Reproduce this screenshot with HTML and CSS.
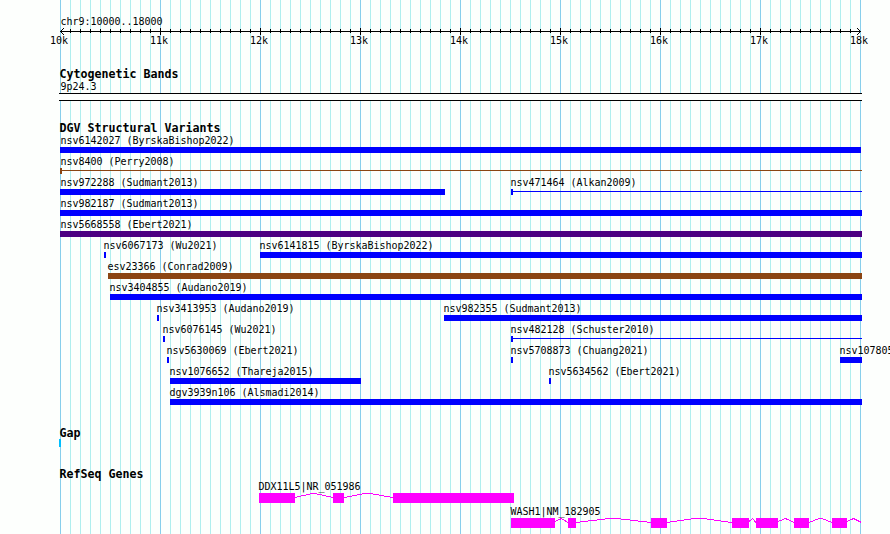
FILE: index.html
```html
<!DOCTYPE html>
<html lang="en">
<head>
  <meta charset="UTF-8">
  <title>chr9:10000..18000</title>
  <link rel="stylesheet" href="styles.css">
</head>
<body>
  <div class="panel">
    <div class="ruler">
      <div class="label">chr9:10000..18000</div>
      <svg class="scale" width="890" height="7" shape-rendering="crispEdges">
        <defs>
          <pattern id="minor" x="60" width="10" height="7" patternUnits="userSpaceOnUse">
            <rect y="1" width="1" height="4"/>
          </pattern>
          <pattern id="major" x="60" width="100" height="7" patternUnits="userSpaceOnUse">
            <rect width="1" height="7"/>
          </pattern>
        </defs>
        <rect x="60" y="3" width="801" height="1"/>
        <rect x="65" width="790" height="7" fill="url(#minor)"/>
        <rect x="65" width="790" height="7" fill="url(#major)"/>
        <path d="M61 2h1v1h-1zM62 1h1v1h-1zM63 0h1v1h-1zM61 4h1v1h-1zM62 5h1v1h-1zM63 6h1v1h-1z"/>
        <path d="M859 2h1v1h-1zM858 1h1v1h-1zM857 0h1v1h-1zM859 4h1v1h-1zM858 5h1v1h-1zM857 6h1v1h-1z"/>
      </svg>
      <div class="numbers">
        <span>10k</span><span>11k</span><span>12k</span><span>13k</span><span>14k</span><span>15k</span><span>16k</span><span>17k</span><span>18k</span>
      </div>
    </div>

    <div class="track">
      <h2>Cytogenetic Bands</h2>
      <div class="label">9p24.3</div>
      <div class="band"></div>
    </div>

    <div class="track variants">
      <h2>DGV Structural Variants</h2>
      <div class="row">
        <div class="feature edge" style="--x:60;--w:801"><span>nsv6142027 (ByrskaBishop2022)</span><i></i></div>
      </div>
      <div class="row">
        <div class="feature edge thin brown" style="--x:60;--w:802"><span>nsv8400 (Perry2008)</span><i></i></div>
      </div>
      <div class="row">
        <div class="feature edge" style="--x:60;--w:385"><span>nsv972288 (Sudmant2013)</span><i></i></div>
        <div class="feature thin" style="--x:511;--w:351"><span>nsv471464 (Alkan2009)</span><i></i></div>
      </div>
      <div class="row">
        <div class="feature edge" style="--x:60;--w:802"><span>nsv982187 (Sudmant2013)</span><i></i></div>
      </div>
      <div class="row">
        <div class="feature edge purple" style="--x:60;--w:802"><span>nsv5668558 (Ebert2021)</span><i></i></div>
      </div>
      <div class="row">
        <div class="feature" style="--x:104;--w:2"><span>nsv6067173 (Wu2021)</span><i></i></div>
        <div class="feature" style="--x:260;--w:602"><span>nsv6141815 (ByrskaBishop2022)</span><i></i></div>
      </div>
      <div class="row">
        <div class="feature brown" style="--x:108;--w:754"><span>esv23366 (Conrad2009)</span><i></i></div>
      </div>
      <div class="row">
        <div class="feature" style="--x:110;--w:752"><span>nsv3404855 (Audano2019)</span><i></i></div>
      </div>
      <div class="row">
        <div class="feature" style="--x:157;--w:2"><span>nsv3413953 (Audano2019)</span><i></i></div>
        <div class="feature" style="--x:444;--w:418"><span>nsv982355 (Sudmant2013)</span><i></i></div>
      </div>
      <div class="row">
        <div class="feature" style="--x:163;--w:2"><span>nsv6076145 (Wu2021)</span><i></i></div>
        <div class="feature thin" style="--x:511;--w:351"><span>nsv482128 (Schuster2010)</span><i></i></div>
      </div>
      <div class="row">
        <div class="feature" style="--x:167;--w:2"><span>nsv5630069 (Ebert2021)</span><i></i></div>
        <div class="feature" style="--x:511;--w:2"><span>nsv5708873 (Chuang2021)</span><i></i></div>
        <div class="feature" style="--x:840;--w:22"><span>nsv107805</span><i></i></div>
      </div>
      <div class="row">
        <div class="feature" style="--x:170;--w:191"><span>nsv1076652 (Thareja2015)</span><i></i></div>
        <div class="feature" style="--x:549;--w:2"><span>nsv5634562 (Ebert2021)</span><i></i></div>
      </div>
      <div class="row">
        <div class="feature" style="--x:170;--w:692"><span>dgv3939n106 (Alsmadi2014)</span><i></i></div>
      </div>
    </div>

    <div class="track">
      <h2>Gap</h2>
      <div class="gap"></div>
    </div>

    <div class="track">
      <h2>RefSeq Genes</h2>
      <div class="gene" style="--x:259">
        <span>DDX11L5|NR_051986</span>
        <svg width="255" height="10" shape-rendering="crispEdges">
          <path class="exon" d="M0 0h36v10h-36zM74 0h11v10h-11zM134 0h121v10h-121z"/>
          <path class="intron" d="M36 4.5L53 .5H56L74 4.5M85 4.5L106 .5H111L134 4.5"/>
        </svg>
      </div>
      <div class="gene" style="--x:511">
        <span>WASH1|NM_182905</span>
        <svg width="351" height="10" shape-rendering="crispEdges">
          <path class="exon" d="M0 0h44v10h-44zM57 0h8v10h-8zM140 0h16v10h-16zM221 0h17v10h-17zM245 0h22v10h-22zM283 0h15v10h-15zM321 0h15v10h-15z"/>
          <path class="intron" d="M44 3.5L50.5 .5L57 4.5M65 4.5L98 .5H106L140 4.5M156 4.5L184 .5H192L221 4.5M238 3.5L241.5 .5L245 4.5M267 3.5L274.5 .5L283 4.5M298 4.5L308 .5H311L321 4.5M336 3.5L342.5 .5L350.5 4.5"/>
        </svg>
      </div>
    </div>
  </div>
</body>
</html>
```
FILE: styles.css
```css
body {
  margin: 0;
  overflow: hidden;
  background: #fdfffd;
  color: #000;
  font: 10px/13px "DejaVu Sans Mono", "Liberation Mono", monospace;
  letter-spacing: -0.02px;
}
.panel {
  width: 890px;
  height: 534px;
  overflow: hidden;
  box-sizing: border-box;
  padding-top: 15px;
  /* major lines every 1k, minor lines every 100bp */
  background:
    repeating-linear-gradient(to right, #87ceeb 0 1px, transparent 1px 100px) 60px 0 / 801px 100% no-repeat,
    repeating-linear-gradient(to right, #afeeee 0 1px, transparent 1px 10px) 60px 0 / 801px 100% no-repeat;
}
svg {
  display: block;
}
.label {
  height: 13px;
  padding-left: 60.5px;
}
.numbers {
  display: flex;
  height: 13px;
  margin-top: -1px;
  padding-left: 50px;
}
.numbers span {
  flex: none;
  width: 100px;
}
.track {
  margin-top: 21px;
}
.track h2 {
  height: 12px;
  margin: 0;
  padding-left: 59.5px;
  font-size: 11.63px;
  line-height: 13px;
  letter-spacing: 0;
}
.band {
  width: 803px;
  height: 6px;
  margin-left: 59px;
  border: solid #000;
  border-width: 1px 0;
  background: #fdfffd;
}
.variants {
  margin-bottom: -1px;
}
.row {
  display: grid;
  height: 21px;
}
/* all features of a row share one cell, --x is the start */
.feature {
  grid-area: 1 / 1;
  margin-left: calc(var(--x) * 1px);
  color: #00f;
}
.feature span, .gene span {
  display: block;
  width: 0;
  height: 13px;
  margin-left: -0.5px;
  white-space: nowrap;
  color: #000;
}
.feature.edge span {
  margin-left: 0.5px;
}
.feature i {
  display: block;
  width: calc(var(--w) * 1px);
  height: 6px;
  background: currentColor;
}
.feature.thin i {
  background:
    linear-gradient(currentColor, currentColor) 0 0 / 2px 6px no-repeat,
    linear-gradient(currentColor, currentColor) 0 2px / 100% 1px no-repeat;
}
.feature.brown {
  color: #8b4513;
}
.feature.purple {
  color: #4b0082;
}
.gap {
  width: 2px;
  height: 8px;
  margin-left: 59px;
  background: #00bfff;
}
.gene {
  height: 25px;
  margin-left: calc(var(--x) * 1px);
}
.exon {
  fill: #f0f;
}
.intron {
  fill: none;
  stroke: #f0f;
}
```
